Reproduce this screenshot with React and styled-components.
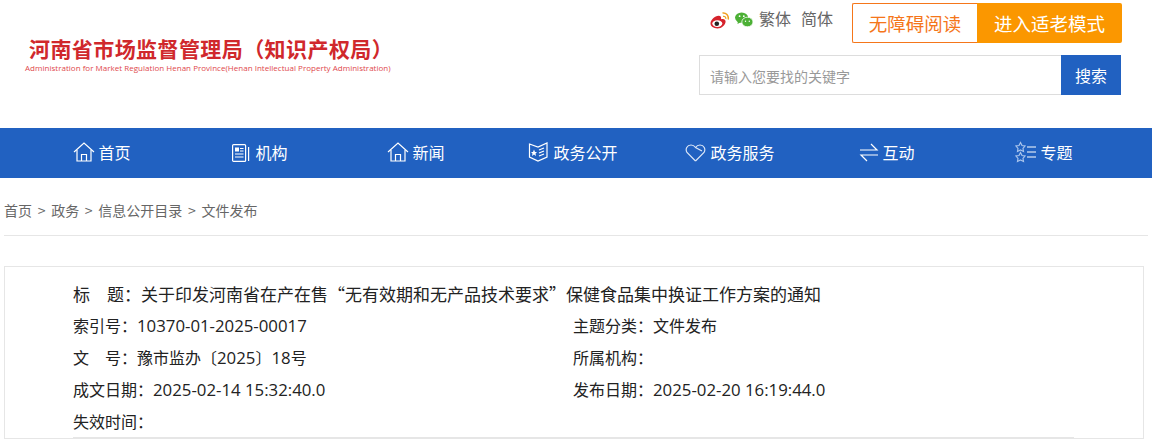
import React from "react";
import styled, { createGlobalStyle } from "styled-components";

const GlobalStyle = createGlobalStyle`
  html, body { margin: 0; padding: 0; background: #fff; overflow: hidden; }
  body { font-family: "Microsoft YaHei", "Noto Sans CJK SC", "Liberation Sans", sans-serif; }
  * { box-sizing: border-box; }
`;

const Page = styled.div`
  width: 1152px;
  height: 447px;
  overflow: hidden;
`;

const Header = styled.header`
  height: 128px;
  display: flex;
  justify-content: space-between;
  padding: 3px 31px 0 25px;
`;

const Logo = styled.div`
  padding-top: 30px;
`;

const LogoTitle = styled.div`
  font-size: 21px;
  line-height: 30px;
  font-weight: 700;
  letter-spacing: 0.42px;
  margin-left: 4px;
  white-space: nowrap;
  color: #d0282c;
`;

const LogoSub = styled.div`
  font-family: "Open Sans", "Liberation Sans", sans-serif;
  font-size: 8px;
  line-height: 10px;
  letter-spacing: 0.02px;
  color: #e0484c;
  white-space: nowrap;
`;

const Tools = styled.div`
  width: 422px;
  display: flex;
  flex-direction: column;
  gap: 12px;
`;

const ToolRow = styled.div`
  display: flex;
  height: 40px;
`;

const Socials = styled.div`
  flex: none;
  display: flex;
  align-items: flex-start;
  padding: 6px 0 0 11px;
  width: 153px;
  gap: 5px;
`;

const Lang = styled.a`
  font-size: 16px;
  line-height: 18px;
  color: #666;
  margin-left: ${(p) => p.$gap || 0}px;
`;

const IconSlot = styled.span`
  display: inline-flex;
  margin-top: 3px;
`;

const OutlineBtn = styled.button`
  flex: none;
  width: 125px;
  height: 40px;
  border: 1px solid #f5761a;
  border-right: none;
  border-radius: 2px 0 0 2px;
  background: #fff;
  color: #f5761a;
  font: inherit;
  font-size: 18.5px;
  padding: 0;
`;

const SolidBtn = styled.button`
  flex: none;
  width: 145px;
  height: 40px;
  border: none;
  border-radius: 0 2px 2px 0;
  background: #fb9700;
  color: #fff;
  font: inherit;
  font-size: 18.5px;
  padding: 0;
`;

const Search = styled.div`
  display: flex;
  height: 40px;
`;

const SearchInput = styled.div`
  flex: 1;
  border: 1px solid #ddd;
  border-right: none;
  padding-left: 10px;
  font-size: 14px;
  line-height: 40px;
  color: #999;
`;

const SearchBtn = styled.button`
  width: 60px;
  border: none;
  background: #2161c1;
  color: #fff;
  font: inherit;
  font-size: 16px;
  padding: 0;
`;

const Nav = styled.nav`
  height: 50px;
  background: #2161c1;
  display: grid;
  grid-template-columns: repeat(7, 157px);
  padding-left: 23.5px;
`;

const NavItem = styled.a`
  display: flex;
  align-items: center;
  justify-content: center;
  gap: 3px;
  color: #fff;
  font-size: 16px;
  padding-bottom: 2px;
  white-space: nowrap;
`;

const Crumbs = styled.div`
  margin: 0 4px;
  height: 58px;
  border-bottom: 1px solid #e6e6e6;
  display: flex;
  align-items: center;
  gap: 5.7px;
  padding-top: 7px;
  font-size: 14px;
  color: #666;
`;

const Info = styled.section`
  margin: 30px 0 0 4px;
  width: 1140px;
  border: 1px solid #e6e6e6;
  padding: 11px 69px 0 68px;
`;

const InfoTitle = styled.h1`
  margin: 0;
  font-size: 17px;
  font-weight: 400;
  line-height: 31px;
  color: #222;
  white-space: nowrap;
`;

const MetaGrid = styled.div`
  display: grid;
  grid-template-columns: 500px 1fr;
  border-bottom: 1px solid #e6e6e6;
`;

const Meta = styled.div`
  height: 32px;
  font-size: 16px;
  line-height: 32px;
  color: #222;
  white-space: nowrap;
`;

const Num = styled.span`
  font-family: "Open Sans", "Liberation Sans", sans-serif;
  font-size: 16.8px;
  line-height: 1;
`;

const Svg = ({ children, w = 22, h = 22 }) => (
  <svg width={w} height={h} viewBox={`0 0 ${w} ${h}`} fill="none" stroke="#fff" strokeWidth="1.2">
    {children}
  </svg>
);

const HomeIcon = () => (
  <Svg>
    <path d="M1 11 L11 2 L21 11" />
    <path d="M4 9 V20 H18 V9" />
    <path d="M8.5 20 V13.5 H13.5 V20" />
  </Svg>
);

const NewsIcon = () => (
  <Svg>
    <rect x="2.6" y="3.6" width="13" height="16.8" rx="1" />
    <path d="M18.6 6 V20" />
    <rect x="5" y="6.5" width="4" height="4" fill="#fff" stroke="none" />
    <path d="M10 7.5 H13.5 M10 10 H13.5 M5 13 H13.5 M5 16 H13.5" />
  </Svg>
);

const OpenIcon = () => (
  <Svg>
    <path d="M1.5 3 L10 6 L19 2 V16 L10 20 L1.5 16 Z" />
    <path d="M11 9 L16 7 M11 12 L16 10 M11 15 L16 13" />
    <path d="M6 8.5 L7 11 L9 11 L7.5 12.5 L8 15 L6 13.5 L4 15 L4.5 12.5 L3 11 L5 11 Z" fill="#fff" stroke="none" />
  </Svg>
);

const HeartIcon = () => (
  <Svg>
    <g stroke="#dbe6f7">
      <path d="M10.5 20 L2 11.5 C0 8 2 4 6 4 C8 4 9.5 5 10.5 6.5 L17 10 M10.5 20 L19 11.5 C21 8 19 4 15 4 C13 4 11.5 5 10.5 6.5" />
    </g>
  </Svg>
);

const SwapIcon = () => (
  <Svg w={20} h={22}>
    <path d="M1 9 H18 L12 3" />
    <path d="M19 14 H2 L8 20" />
  </Svg>
);

const TopicIcon = () => (
  <Svg>
    <g stroke="#a9c4ec">
      <path d="M5.5 1.5 L7 4.5 L10 5 L8 7.5 L8.5 10.5 L5.5 9 L2.5 10.5 L3 7.5 L1 5 L4 4.5 Z" />
      <path d="M5.5 11.5 L7 14.5 L10 15 L8 17.5 L8.5 20.5 L5.5 19 L2.5 20.5 L3 17.5 L1 15 L4 14.5 Z" />
    </g>
    <path d="M12 6 H21 M12 11 H21 M12 16 H21" />
  </Svg>
);

const WeiboIcon = () => (
  <svg width="20" height="18" viewBox="0 0 20 18">
    <path d="M0.5 11.5 C0.5 8 5 3.8 8.5 3.8 C11 3.8 11.5 5.6 11 7.2 C13.5 6.4 15.6 7.2 15.6 9.4 C15.6 13 11.5 16.4 7.5 16.4 C3.5 16.4 0.5 14.4 0.5 11.5 Z" fill="#d5232c" />
    <ellipse cx="7.3" cy="11.6" rx="5" ry="3.4" fill="#fff" />
    <circle cx="6.8" cy="11.8" r="2.3" fill="#222" />
    <path d="M12.5 1 C16 0.5 19 3.5 18.2 7.5" stroke="#f0a020" strokeWidth="1.5" fill="none" />
    <path d="M13 4.4 C15 4 16.2 5.4 15.8 7" stroke="#f0a020" strokeWidth="1.2" fill="none" />
  </svg>
);

const WechatIcon = () => (
  <svg width="18" height="16" viewBox="0 0 18 16">
    <ellipse cx="6.6" cy="5.6" rx="6.6" ry="5.2" fill="#4cb035" />
    <path d="M3 8.5 L2.5 12 L6 10 Z" fill="#4cb035" />
    <ellipse cx="12.4" cy="10" rx="5.6" ry="4.8" fill="#4cb035" stroke="#fff" strokeWidth="0.8" />
    <circle cx="4.6" cy="4.2" r="0.9" fill="#fff" />
    <circle cx="8.8" cy="4.2" r="0.9" fill="#fff" />
    <circle cx="10.5" cy="9.2" r="0.7" fill="#fff" />
    <circle cx="14.3" cy="9.2" r="0.7" fill="#fff" />
  </svg>
);

const navItems = [
  ["首页", HomeIcon],
  ["机构", NewsIcon],
  ["新闻", HomeIcon],
  ["政务公开", OpenIcon],
  ["政务服务", HeartIcon],
  ["互动", SwapIcon],
  ["专题", TopicIcon],
];

export default function App() {
  return (
    <Page>
      <GlobalStyle />
      <Header>
        <Logo>
          <LogoTitle>河南省市场监督管理局（知识产权局）</LogoTitle>
          <LogoSub>Administration for Market Regulation Henan Province(Henan Intellectual Property Administration)</LogoSub>
        </Logo>
        <Tools>
          <ToolRow>
            <Socials>
              <IconSlot><WeiboIcon /></IconSlot>
              <IconSlot><WechatIcon /></IconSlot>
              <Lang $gap={1}>繁体</Lang>
              <Lang $gap={5}>简体</Lang>
            </Socials>
            <OutlineBtn>无障碍阅读</OutlineBtn>
            <SolidBtn>进入适老模式</SolidBtn>
          </ToolRow>
          <Search>
            <SearchInput>请输入您要找的关键字</SearchInput>
            <SearchBtn>搜索</SearchBtn>
          </Search>
        </Tools>
      </Header>
      <Nav>
        {navItems.map(([label, Icon]) => (
          <NavItem key={label}>
            <Icon />
            {label}
          </NavItem>
        ))}
      </Nav>
      <Crumbs>
        <span>首页</span><span>&gt;</span>
        <span>政务</span><span>&gt;</span>
        <span>信息公开目录</span><span>&gt;</span>
        <span>文件发布</span>
      </Crumbs>
      <Info>
        <InfoTitle>标　题：关于印发河南省在产在售“无有效期和无产品技术要求”保健食品集中换证工作方案的通知</InfoTitle>
        <MetaGrid>
          <Meta>索引号：<Num>10370-01-2025-00017</Num></Meta>
          <Meta>主题分类：文件发布</Meta>
          <Meta>文　号：豫市监办〔<Num>2025</Num>〕<Num>18</Num>号</Meta>
          <Meta>所属机构：</Meta>
          <Meta>成文日期：<Num>2025-02-14 15:32:40.0</Num></Meta>
          <Meta>发布日期：<Num>2025-02-20 16:19:44.0</Num></Meta>
          <Meta>失效时间：</Meta>
        </MetaGrid>
      </Info>
    </Page>
  );
}
